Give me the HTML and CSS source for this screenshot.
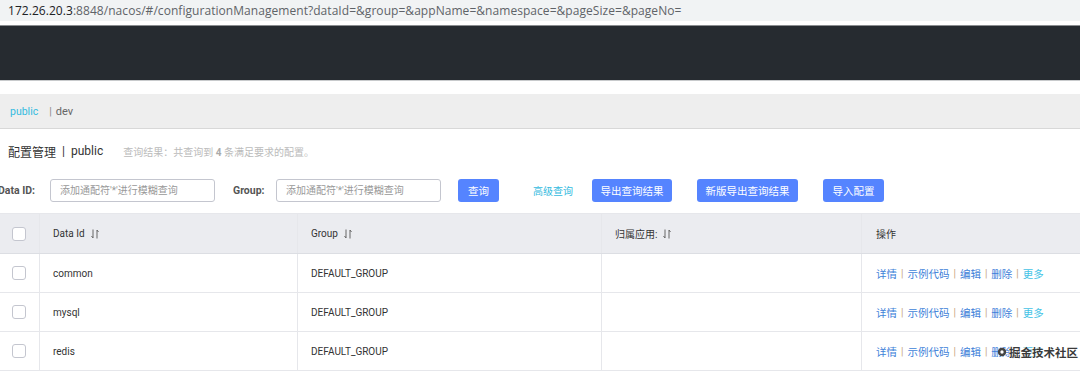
FILE: index.html
```html
<!DOCTYPE html>
<html lang="zh-CN">
<head>
<meta charset="utf-8">
<title>Nacos 配置管理</title>
<link rel="stylesheet" href="styles.css">
</head>
<body>
<div class="urlbar"><span class="host">172.26.20.3</span>:8848/nacos/#/configurationManagement?dataId=&amp;group=&amp;appName=&amp;namespace=&amp;pageSize=&amp;pageNo=</div>
<div class="topnav"></div>
<div class="nsbar"><span class="ns-active">public</span><span class="ns-sep">|</span><span class="ns">dev</span></div>
<div class="titlerow">
  <span class="title">配置管理</span><span class="title-sep">|</span><span class="title">public</span>
  <span class="subtitle">查询结果：共查询到 <b>4</b> 条满足要求的配置。</span>
</div>
<div class="searchrow">
  <label class="lbl lbl-id">Data ID:</label>
  <div class="input">添加通配符'*'进行模糊查询</div>
  <label class="lbl lbl-group">Group:</label>
  <div class="input">添加通配符'*'进行模糊查询</div>
  <button class="btn btn-query">查询</button>
  <span class="adv">高级查询</span>
  <button class="btn btn-export">导出查询结果</button>
  <button class="btn btn-export2">新版导出查询结果</button>
  <button class="btn btn-import">导入配置</button>
</div>
<div class="table">
  <div class="row head">
    <div class="cell c-check"><span class="cb"></span></div>
    <div class="cell c-id">Data Id <svg class="sort" viewBox="0 0 8 10" width="8" height="10"><path d="M2 0.5V9M2 9L0.5 7M6 9.5V1M6 1L7.5 3" stroke="#666" stroke-width="1" fill="none"/></svg></div>
    <div class="cell c-group">Group <svg class="sort" viewBox="0 0 8 10" width="8" height="10"><path d="M2 0.5V9M2 9L0.5 7M6 9.5V1M6 1L7.5 3" stroke="#666" stroke-width="1" fill="none"/></svg></div>
    <div class="cell c-app">归属应用: <svg class="sort" viewBox="0 0 8 10" width="8" height="10"><path d="M2 0.5V9M2 9L0.5 7M6 9.5V1M6 1L7.5 3" stroke="#666" stroke-width="1" fill="none"/></svg></div>
    <div class="cell c-op">操作</div>
  </div>
  <div class="row">
    <div class="cell c-check"><span class="cb"></span></div>
    <div class="cell c-id">common</div>
    <div class="cell c-group">DEFAULT_GROUP</div>
    <div class="cell c-app"></div>
    <div class="cell c-op"><a>详情</a><i>|</i><a>示例代码</a><i>|</i><a>编辑</a><i>|</i><a>删除</a><i>|</i><a class="more">更多</a></div>
  </div>
  <div class="row">
    <div class="cell c-check"><span class="cb"></span></div>
    <div class="cell c-id">mysql</div>
    <div class="cell c-group">DEFAULT_GROUP</div>
    <div class="cell c-app"></div>
    <div class="cell c-op"><a>详情</a><i>|</i><a>示例代码</a><i>|</i><a>编辑</a><i>|</i><a>删除</a><i>|</i><a class="more">更多</a></div>
  </div>
  <div class="row">
    <div class="cell c-check"><span class="cb"></span></div>
    <div class="cell c-id">redis</div>
    <div class="cell c-group">DEFAULT_GROUP</div>
    <div class="cell c-app"></div>
    <div class="cell c-op"><a>详情</a><i>|</i><a>示例代码</a><i>|</i><a>编辑</a><i>|</i><a>删除</a><i>|</i><a class="more">更多</a></div>
  </div>
</div>
<div class="watermark"><svg viewBox="0 0 12 12" width="10" height="10"><circle cx="6" cy="6" r="5" fill="#444"/><circle cx="6" cy="6" r="2" fill="#fff"/></svg><span>掘金技术社区</span></div>
</body>
</html>
```
FILE: styles.css
```css
* { box-sizing: border-box; }
html, body { margin: 0; padding: 0; }
body {
  width: 1080px;
  height: 373px;
  overflow: hidden;
  position: relative;
  background: #fff;
  font-family: Roboto, "Noto Sans CJK SC", sans-serif;
  color: #333;
}
.urlbar {
  height: 21px;
  background: #f1f3f4;
  padding-left: 8px;
  font-family: "Open Sans", "Noto Sans CJK SC", sans-serif;
  font-size: 12px;
  letter-spacing: 0.05px;
  line-height: 21px;
  color: #5f6368;
  white-space: nowrap;
}
.urlbar .host { color: #202124; }
.topnav {
  margin-top: 4px;
  height: 56px;
  background: #262b30;
  border-top: 1px solid #8a8d90;
  border-bottom: 1px solid #c8cacc;
}
.nsbar {
  margin-top: 13px;
  height: 35px;
  background: #eeeeee;
  border-bottom: 1px solid #d8d8d8;
  display: flex;
  align-items: center;
  padding-left: 10px;
  font-size: 10.5px;
}
.ns-active { color: #33bbe0; }
.ns-sep { color: #888; margin-left: 11px; margin-right: 4px; }
.ns { color: #666; font-size: 11px; }
.titlerow {
  height: 44px;
  display: flex;
  align-items: center;
  padding-left: 8px;
}
.title { font-size: 12px; color: #333; }
.title-sep { font-size: 12px; margin: 0 6px; color: #333; }
.subtitle { font-size: 10px; color: #bbb; margin-left: 20px; }
.subtitle b { color: #aaa; }
.searchrow {
  height: 28px;
  display: flex;
  align-items: center;
  margin-top: 3px;
}
.lbl { font-size: 10.5px; font-weight: bold; color: #555; }
.lbl-id { margin-left: -2px; width: 52px; }
.lbl-group { margin-left: 18px; width: 43px; }
.input {
  width: 165px;
  height: 23px;
  border: 1px solid #c4c6cf;
  border-radius: 3px;
  font-size: 10px;
  color: #999;
  line-height: 21px;
  padding-left: 9px;
}
.btn {
  height: 23px;
  border: none;
  border-radius: 3px;
  background: #5584ff;
  color: #fff;
  font-family: Roboto, "Noto Sans CJK SC", sans-serif;
  font-size: 10.5px;
  padding: 0;
}
.btn-query { margin-left: 17px; width: 41px; }
.adv { margin-left: 34px; font-size: 10px; color: #33bbe0; }
.btn-export { margin-left: 19px; width: 80px; }
.btn-export2 { margin-left: 25px; width: 101px; }
.btn-import { margin-left: 25px; width: 61px; }
.table {
  margin-top: 9px;
  border-top: 1px solid #e6e7eb;
}
.row {
  display: flex;
  height: 39px;
  border-bottom: 1px solid #e6e7eb;
  font-size: 10px;
  color: #333;
}
.row.head { height: 40px; background: #ebecf0; border-bottom-color: #dcdee3; }
.cell {
  display: flex;
  align-items: center;
  border-right: 1px solid #e6e7eb;
  padding-left: 13px;
}
.c-check { width: 40px; padding-left: 12px; }
.c-id { width: 258px; }
.c-group { width: 304px; }
.c-app { width: 260px; }
.c-op { flex: 1; border-right: none; padding-left: 14px; }
.cb {
  width: 14px;
  height: 14px;
  border: 1px solid #c4c6cf;
  border-radius: 3px;
  background: #fff;
}
.sort { margin-left: 6px; }
.c-op a { color: #3d7fd9; font-size: 10.5px; }
.c-op a.more { color: #44c3e6; }
.c-op i { font-style: normal; color: #c6a57c; margin: 0 4px; font-size: 10px; }
.watermark {
  position: absolute;
  left: 997px;
  top: 344px;
  display: flex;
  align-items: center;
  gap: 2px;
  white-space: nowrap;
  font-size: 11.5px;
  font-weight: bold;
  color: #3a3a3a;
  text-shadow: 0 0 2px #fff, 0 0 2px #fff;
}
```
